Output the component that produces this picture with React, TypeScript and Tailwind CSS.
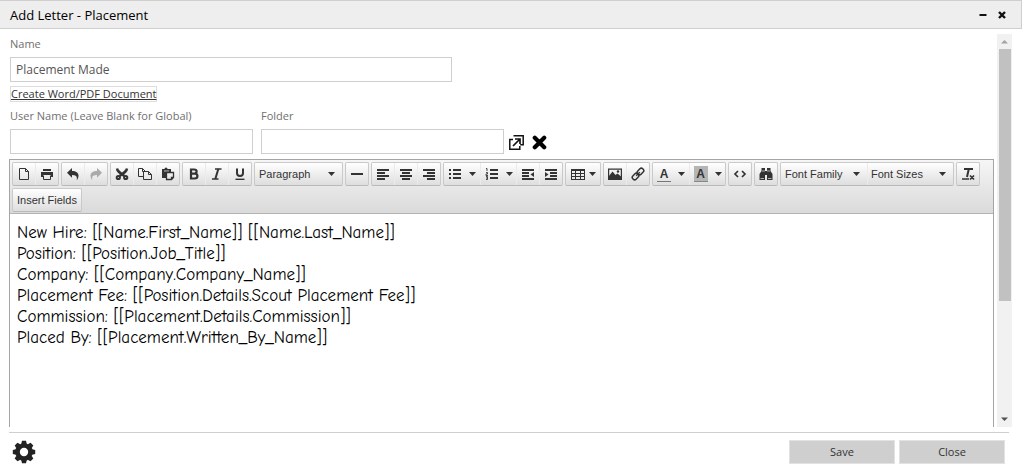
import type { ReactNode } from 'react';

const letter = `New Hire: [[Name.First_Name]] [[Name.Last_Name]]
Position: [[Position.Job_Title]]
Company: [[Company.Company_Name]]
Placement Fee: [[Position.Details.Scout Placement Fee]]
Commission: [[Placement.Details.Commission]]
Placed By: [[Placement.Written_By_Name]]`;

function Icon({ children }: { children: ReactNode }) {
  return (
    <svg viewBox="0 0 14 14" className="size-3.5 shrink-0" fill="none" stroke="currentColor" aria-hidden="true">
      {children}
    </svg>
  );
}

function Caret() {
  return (
    <svg viewBox="0 0 7 4" className="h-1 w-[7px] shrink-0" fill="currentColor" aria-hidden="true">
      <path d="M0 0h7L3.5 4z" />
    </svg>
  );
}

function Group({ children }: { children: ReactNode }) {
  return (
    <div className="flex h-6 rounded-[2px] border border-[#c9c9c9] border-b-[#b9b9b9] bg-linear-to-b from-white to-[#dedede]">
      {children}
    </div>
  );
}

function Tool({ label, wide, children }: { label: string; wide?: boolean; children: ReactNode }) {
  return (
    <button
      type="button"
      aria-label={label}
      title={label}
      className={
        wide
          ? 'flex h-full w-9 items-center justify-center gap-[7px] border-l border-[#ebebeb] text-[#333] first:border-l-0'
          : 'flex h-full w-[23px] items-center justify-center border-l border-[#ebebeb] text-[#333] first:w-[22px] first:border-l-0 disabled:text-[#aaa]'
      }
      disabled={label === 'Redo'}
    >
      {children}
    </button>
  );
}

function Picker({ children }: { children: ReactNode }) {
  return (
    <div className="relative flex items-center text-[#333]">
      {children}
      <span className="pointer-events-none absolute right-[7px]">
        <Caret />
      </span>
    </div>
  );
}

function Lines({ d }: { d: string }) {
  return (
    <Icon>
      <path strokeWidth="2" d={d} />
    </Icon>
  );
}

function Toolbar() {
  return (
    <div
      role="toolbar"
      aria-label="Formatting"
      className="flex flex-wrap gap-[2px] border-b border-[#b4b4b4] bg-linear-to-b from-[#f6f6f6] to-[#dadada] px-[2px] pt-[2px] pb-px font-['Liberation_Sans',Arial,sans-serif] text-[11px]"
    >
      <Group>
        <Tool label="New document">
          <Icon><path d="M2.500 1.500h6l3 3v8h-9zM8.500 1.500v3h3" /></Icon>
        </Tool>
        <Tool label="Print">
          <Icon>
            <path fill="currentColor" stroke="none" d="M3 2h8v2H3zM1 5h12v5h-2V8H3v2H1z" />
            <path d="M3.500 8.500v4h7v-4" />
          </Icon>
        </Tool>
      </Group>
      <Group>
        <Tool label="Undo">
          <Icon><path fill="currentColor" stroke="none" d="M1 5.700l5-4.700v3c6 0 8.500 4 4.700 9.300.8-4-.7-5.300-4.700-5.300v2.700z" /></Icon>
        </Tool>
        <Tool label="Redo">
          <Icon><path fill="currentColor" stroke="none" d="M13 5.700L8 1v3C2 4-.5 8 3.300 13.300 2.500 9.300 4 8 8 8v2.700z" /></Icon>
        </Tool>
      </Group>
      <Group>
        <Tool label="Cut">
          <Icon>
            <path strokeWidth="2.400" d="M2 1.500c.3 2.500 1.800 3.700 7.500 7.500M12 1.500c-.3 2.500-1.800 3.700-7.500 7.500" />
            <circle cx="3.300" cy="10.500" r="1.600" strokeWidth="2" />
            <circle cx="10.700" cy="10.500" r="1.600" strokeWidth="2" />
          </Icon>
        </Tool>
        <Tool label="Copy">
          <Icon>
            <path d="M5.500 9.500h-5v-8h4l3 3M4.500 1.500v3h2M5.500 4.500h5l3 3v5h-8zM10.500 4.500v3h3" />
          </Icon>
        </Tool>
        <Tool label="Paste">
          <Icon>
            <path fill="currentColor" stroke="none" d="M1 2h2.500a1.500 1.500 0 013 0H10v3H5v6H1z" />
            <path stroke="#eee" strokeWidth=".8" d="M3 4h5" />
            <path strokeWidth="1.300" d="M5.500 5.500h7v5l-2 2h-5zM10.500 12.500v-2h2" />
          </Icon>
        </Tool>
      </Group>
      <Group>
        <Tool label="Bold">
          <Icon><path strokeWidth="2.200" d="M4 2.500h3.200c3.200 0 3.200 4.200 0 4.200H4zM4 6.700h3.800c3.500 0 3.500 4.800 0 4.800H4z" /></Icon>
        </Tool>
        <Tool label="Italic">
          <Icon><path strokeWidth="1.300" d="M5 2h6.500M2 12h6.500" /><path strokeWidth="2" d="M8.300 2L5.300 12" /></Icon>
        </Tool>
        <Tool label="Underline">
          <Icon><path strokeWidth="2" d="M4 1.500v4.500c0 4 6 4 6 0V1.500" /><path strokeWidth="1.400" d="M2.500 12.300h9" /></Icon>
        </Tool>
      </Group>
      <Group>
        <Picker>
          <select aria-label="Block format" className="h-full w-[87px] appearance-none bg-transparent pl-1 outline-none">
            <option>Paragraph</option>
          </select>
        </Picker>
      </Group>
      <Group>
        <Tool label="Horizontal line"><Lines d="M1 7h12" /></Tool>
      </Group>
      <Group>
        <Tool label="Align left"><Lines d="M1 3h12M1 6h8M1 9h12M1 12h8" /></Tool>
        <Tool label="Align center"><Lines d="M1 3h12M3 6h8M1 9h12M3 12h8" /></Tool>
        <Tool label="Align right"><Lines d="M1 3h12M5 6h8M1 9h12M5 12h8" /></Tool>
      </Group>
      <Group>
        <Tool label="Bullet list" wide>
          <Lines d="M1 3h2M1 7h2M1 11h2M5 3h8M5 7h8M5 11h8" />
          <Caret />
        </Tool>
        <Tool label="Numbered list" wide>
          <Icon>
            <path strokeWidth="2" d="M5 3h8M5 7h8M5 11h8" />
            <path strokeWidth=".9" d="M1 1.500h1V4M1 5.500h1.500V7H1v1.500h2M1 9.500h1.500v3H1M1 11h1.500" />
          </Icon>
          <Caret />
        </Tool>
        <Tool label="Decrease indent">
          <Icon>
            <path strokeWidth="2" d="M1 3h12M1 6h7M1 9h7M1 12h12" />
            <path fill="currentColor" stroke="none" d="M13 5v5L9.500 7.500z" />
          </Icon>
        </Tool>
        <Tool label="Increase indent">
          <Icon>
            <path strokeWidth="2" d="M1 3h12M6 6h7M6 9h7M1 12h12" />
            <path fill="currentColor" stroke="none" d="M1 5v5l3.500-2.500z" />
          </Icon>
        </Tool>
      </Group>
      <Group>
        <button type="button" aria-label="Table" className="flex w-[34px] items-center justify-center gap-1 text-[#333]">
          <Icon>
            <path d="M.5 2.500h13v10H.5zM.5 3.500h13M.5 6.500h13M.5 9.500h13M4.500 3v9M9.500 3v9" shapeRendering="crispEdges" />
          </Icon>
          <Caret />
        </button>
      </Group>
      <Group>
        <Tool label="Insert image">
          <Icon>
            <path strokeWidth="1.200" d="M.6 2.100h12.800v10.300H.6z" />
            <path fill="currentColor" stroke="none" d="M1 12V9l3.500-4.500 3 3.500L9.500 6.500 13 9.500V12z" />
            <circle cx="10" cy="4.500" r="1.200" fill="currentColor" stroke="none" />
          </Icon>
        </Tool>
        <Tool label="Insert link">
          <Icon>
            <g transform="rotate(-45 7 7)" strokeWidth="1.500">
              <rect x="0" y="4.700" width="7" height="4.600" rx="2" />
              <rect x="7" y="4.700" width="7" height="4.600" rx="2" />
              <path d="M4.500 7h5" />
            </g>
          </Icon>
        </Tool>
      </Group>
      <Group>
        <Tool label="Text color" wide>
          <span className="flex h-4 w-3.5 items-center justify-center border-b border-[#777] text-[12px] leading-3 font-bold">A</span>
          <Caret />
        </Tool>
        <Tool label="Background color" wide>
          <span className="flex h-4 w-3.5 items-center justify-center border-b border-[#888] bg-[#b5b5b5] text-[12px] leading-3 font-bold">A</span>
          <Caret />
        </Tool>
      </Group>
      <Group>
        <Tool label="Source code">
          <Icon><path strokeWidth="1.700" d="M5 4L2 7l3 3M9 4l3 3-3 3" /></Icon>
        </Tool>
      </Group>
      <Group>
        <Tool label="Find and replace">
          <Icon>
            <path fill="currentColor" stroke="none" d="M2.500 1H6v3h2V1h3.500v3L13.500 7v6H8V8H6v5H.5V7l2-3z" />
            <path stroke="#e8e8e8" strokeWidth=".7" d="M1.500 11.500h3.500M9 11.500h3.500M3 4h3M8 4h3" />
          </Icon>
        </Tool>
      </Group>
      <Group>
        <Picker>
          <select aria-label="Font family" className="h-full w-[86px] appearance-none bg-transparent pl-1 outline-none">
            <option>Font Family</option>
          </select>
        </Picker>
        <Picker>
          <select aria-label="Font size" className="h-full w-[86px] appearance-none border-l border-[#ebebeb] bg-transparent pl-[3px] outline-none">
            <option>Font Sizes</option>
          </select>
        </Picker>
      </Group>
      <Group>
        <Tool label="Clear formatting">
          <Icon>
            <path strokeWidth="2" d="M3 2h9M7.800 2L6 10" />
            <path strokeWidth="1.700" d="M1 12h7M9 8.500l4 4M13 8.500l-4 4" />
          </Icon>
        </Tool>
      </Group>
      <Group>
        <button type="button" className="px-1 text-[#333]">Insert Fields</button>
      </Group>
    </div>
  );
}

function Field({ id, label, value, className }: { id: string; label: string; value?: string; className: string }) {
  return (
    <div className={className}>
      <label htmlFor={id} className="block h-5 text-[11px] leading-4 text-[#707070]">
        {label}
      </label>
      <input
        id={id}
        defaultValue={value}
        className="h-[25px] w-full border border-[#cfcfcf] bg-white px-[5px] text-[12px] text-[#555] outline-none"
      />
    </div>
  );
}

function Gear() {
  return (
    <svg viewBox="-12 -12 24 24" className="size-6" fill="#222" aria-hidden="true">
      <circle r="6.500" fill="none" stroke="#222" strokeWidth="4.600" />
      {[0, 45, 90, 135, 180, 225, 270, 315].map((angle) => (
        <path key={angle} d="M-2.800-8L-2-11.200h4L2.800-8z" transform={`rotate(${angle})`} />
      ))}
    </svg>
  );
}

export default function App() {
  return (
    <div className="flex h-screen flex-col bg-white pr-[2px] font-['Open_Sans','Noto_Sans',sans-serif]">
      <header className="flex h-[29px] shrink-0 items-center border border-l-0 border-[#cfcfcf] bg-[#eee] pr-[15px] pl-[10px]">
        <h1 className="flex-1 pt-[2px] text-[13px] font-medium text-black">Add Letter - Placement</h1>
        <button type="button" aria-label="Minimize" className="mr-[11px]">
          <svg viewBox="0 0 8 8" className="size-2"><path d="M.5 4h7" stroke="#111" strokeWidth="2" /></svg>
        </button>
        <button type="button" aria-label="Close window">
          <svg viewBox="0 0 8 8" className="size-2"><path d="M1 1l6 6M7 1L1 7" stroke="#111" strokeWidth="2.400" /></svg>
        </button>
      </header>

      <div className="mt-[5px] flex min-h-0 flex-1 pr-[10px] pl-[9px]">
        <main className="flex min-w-0 flex-1 flex-col overflow-hidden pt-[2px]">
          <Field id="name" label="Name" value="Placement Made" className="ml-px w-[442px] max-w-full" />
          <a href="#document" className="mt-[4px] ml-px h-4 self-start border border-[#ddd] text-[11px] leading-[14px] text-[#333] underline">
            Create Word/PDF Document
          </a>
          <div className="mt-[6px] ml-px flex items-end gap-2">
            <Field id="user" label="User Name (Leave Blank for Global)" className="w-[243px]" />
            <Field id="folder" label="Folder" className="w-[243px]" />
            <button type="button" aria-label="Choose folder" className="mb-1 -ml-[3px]">
              <svg viewBox="0 0 15 15" className="size-[15px]" fill="none" stroke="#111" strokeWidth="1.500">
                <path d="M4 4.500H.8v9.700h10V11M4.500.8h9.700v9h-3" />
                <path d="M4 11l6.500-6.500M6 4h5v5" strokeWidth="1.700" />
              </svg>
            </button>
            <button type="button" aria-label="Clear folder" className="mb-1">
              <svg viewBox="0 0 15 15" className="size-[15px]">
                <path d="M2.800 2.800l9.400 9.400M12.200 2.800l-9.400 9.400" stroke="#000" strokeWidth="4.200" strokeLinecap="round" />
              </svg>
            </button>
          </div>
          <section aria-label="Letter editor" className="mt-[5px] flex min-h-0 flex-1 flex-col border border-b-0 border-[#a5a5a5]">
            <Toolbar />
            <textarea
              aria-label="Letter body"
              spellCheck={false}
              defaultValue={letter}
              className="w-full flex-1 resize-none overflow-hidden px-[7px] py-2 font-['Comic_Sans_MS','Comic_Neue','Open_Sans',sans-serif] text-[17px] leading-[21px] text-black [font-variant-ligatures:none] outline-none"
            />
          </section>
        </main>
        <div aria-hidden="true" className="ml-[3px] flex w-[15px] shrink-0 flex-col items-center bg-[#f1f1f1]">
          <svg viewBox="0 0 15 15" className="size-[15px]"><path d="M4 9.500h7L7.500 6z" fill="#a3a3a3" /></svg>
          <div className="h-[252px] w-3 bg-[#c1c1c1]" />
          <svg viewBox="0 0 15 15" className="mt-auto size-[15px]"><path d="M4 5.500h7L7.500 9z" fill="#505050" /></svg>
        </div>
      </div>

      <footer className="mx-[9px] mt-[5px] mr-[13px] flex h-[39px] shrink-0 items-center gap-1 border-t border-[#cfcfcf] pr-1 pl-[3px]">
        <button type="button" aria-label="Settings" className="mr-auto">
          <Gear />
        </button>
        <button type="button" className="h-6 w-[106px] border border-[#e2e2e2] bg-[#cfcfcf] text-[11px] text-[#333]">Save</button>
        <button type="button" className="h-6 w-[106px] border border-[#e2e2e2] bg-[#cfcfcf] text-[11px] text-[#333]">Close</button>
      </footer>
    </div>
  );
}
